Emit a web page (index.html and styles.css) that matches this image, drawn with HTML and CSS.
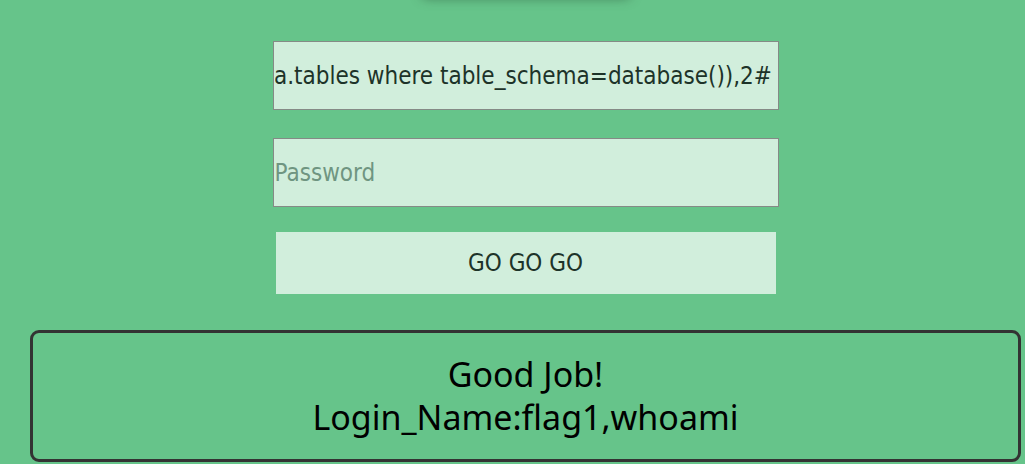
FILE: index.html
```html
<!DOCTYPE html>
<html lang="en">
<head>
    <meta charset="UTF-8">
    <title>Login</title>
    <link rel="stylesheet" href="styles.css">
</head>
<body>
    <div class="page">
        <div class="title-shade"></div>
        <form class="login" onsubmit="return false;">
            <input type="text" id="username" class="field" value="1' union select 1,(select group_concat(table_name) from information_schema.tables where table_schema=database()),2#">
            <input type="password" class="field" placeholder="Password">
            <button type="submit" class="go">GO GO GO</button>
        </form>
        <div class="result">
            Good Job!<br>
            Login_Name:flag1,whoami
        </div>
    </div>
    <script>
        var u = document.getElementById("username");
        u.scrollLeft = u.scrollWidth;
    </script>
</body>
</html>
```
FILE: styles.css
```css
body {
    margin: 0;
    background-color: #66c48a;
    font-family: "DejaVu Sans Condensed", "DejaVu Sans", sans-serif;
    overflow: hidden;
}

.page {
    margin: 0 4px 0 30px;
}

/* shadow of the heading that sits just above the scrolled view */
.title-shade {
    width: 210px;
    height: 12px;
    margin: -14px auto 0;
    background-color: rgba(30, 60, 40, 0.5);
    border-radius: 6px;
    filter: blur(6px);
}

.login {
    display: flex;
    flex-direction: column;
    align-items: center;
    padding-top: 43px;
}

.field {
    width: 506px;
    height: 69px;
    box-sizing: border-box;
    border: 1px solid #858a86;
    background-color: #d1eedc;
    color: #1d3329;
    font-family: inherit;
    font-size: 24px;
    padding: 0 6px 0 1px;
    margin: 0 0 28px;
    outline: none;
}

.field + .field {
    margin-bottom: 25px;
}

.field::placeholder {
    color: #6f9581;
}

.go {
    width: 500px;
    height: 62px;
    border: none;
    background-color: #d1eedc;
    color: #1d3329;
    font-family: inherit;
    font-size: 24px;
    cursor: pointer;
}

.result {
    margin-top: 36px;
    height: 132px;
    box-sizing: border-box;
    border: 3px solid #333;
    border-radius: 9px;
    text-align: center;
    font-family: "Noto Sans", sans-serif;
    font-size: 34px;
    line-height: 43px;
    padding-top: 20px;
    color: #000;
}
```
